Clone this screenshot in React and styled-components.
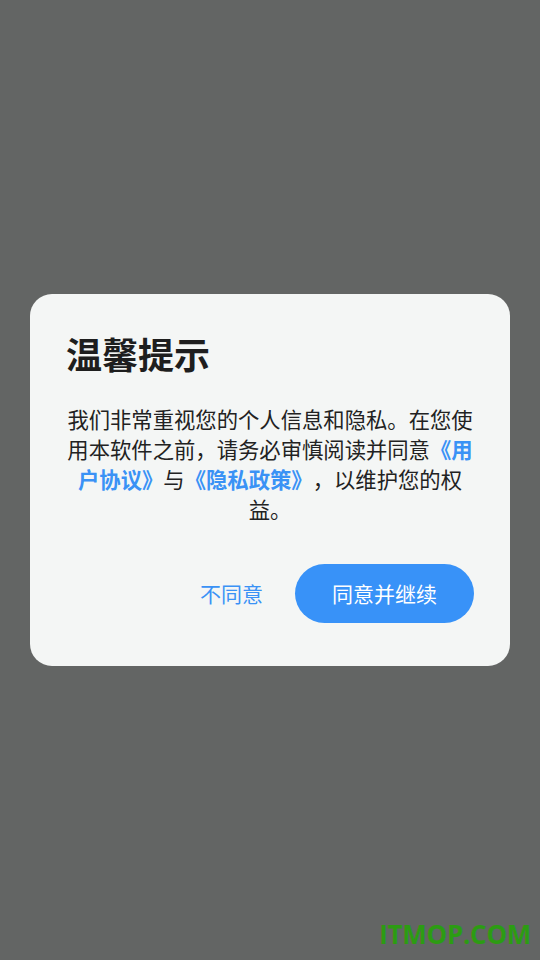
import React from 'react';
import styled, { createGlobalStyle } from 'styled-components';

const GlobalStyle = createGlobalStyle`
    html, body {
        margin: 0;
        padding: 0;
        background: #636564;
    }
    * {
        box-sizing: border-box;
    }
`;

const Screen = styled.div`
    align-items: center;
    background: #636564;
    display: flex;
    font-family: "Noto Sans CJK SC", "Noto Sans", sans-serif;
    height: 960px;
    justify-content: center;
    position: relative;
    width: 540px;
`;

const Dialog = styled.div`
    background: #f4f6f5;
    border-radius: 22px;
    display: flex;
    flex-direction: column;
    padding: 37px 36px 43px;
    width: 480px;
`;

const Title = styled.h2`
    color: #1e1e1e;
    font-size: 36px;
    font-weight: 700;
    line-height: 45px;
    margin: 0 0 28px;
`;

const Message = styled.p`
    color: #222;
    font-size: 21.33px;
    line-height: 30px;
    margin: 0;
    text-align: center;
    text-spacing-trim: space-all;
`;

const Link = styled.span`
    color: #3a92f5;
    font-weight: 700;
`;

const Actions = styled.div`
    align-items: center;
    display: flex;
    gap: 20px;
    justify-content: flex-end;
    margin-top: 40px;
`;

const Button = styled.button`
    background: ${(p) => (p.$primary ? '#3892f8' : 'transparent')};
    border: none;
    border-radius: 30px;
    color: ${(p) => (p.$primary ? '#ffffff' : '#3a92f5')};
    font-family: inherit;
    font-size: 21px;
    height: 59px;
    line-height: 1;
    padding: ${(p) => (p.$primary ? '0 37px' : '0 12px')};
    width: ${(p) => (p.$primary ? '179px' : 'auto')};
`;

const Watermark = styled.div`
    bottom: 8px;
    color: #2c9c13;
    font-family: "Open Sans", "DejaVu Sans", sans-serif;
    font-size: 26px;
    font-weight: 700;
    letter-spacing: -0.3px;
    position: absolute;
    right: 9px;
`;

export default function App() {
    return (
        <Screen>
            <GlobalStyle />
            <Dialog>
                <Title>温馨提示</Title>
                <Message>
                    我们非常重视您的个人信息和隐私。在您使用本软件之前，请务必审慎阅读并同意
                    <Link>《用户协议》</Link>与<Link>《隐私政策》</Link>
                    ，以维护您的权益。
                </Message>
                <Actions>
                    <Button type="button">不同意</Button>
                    <Button type="button" $primary>
                        同意并继续
                    </Button>
                </Actions>
            </Dialog>
            <Watermark>ITMOP.COM</Watermark>
        </Screen>
    );
}
